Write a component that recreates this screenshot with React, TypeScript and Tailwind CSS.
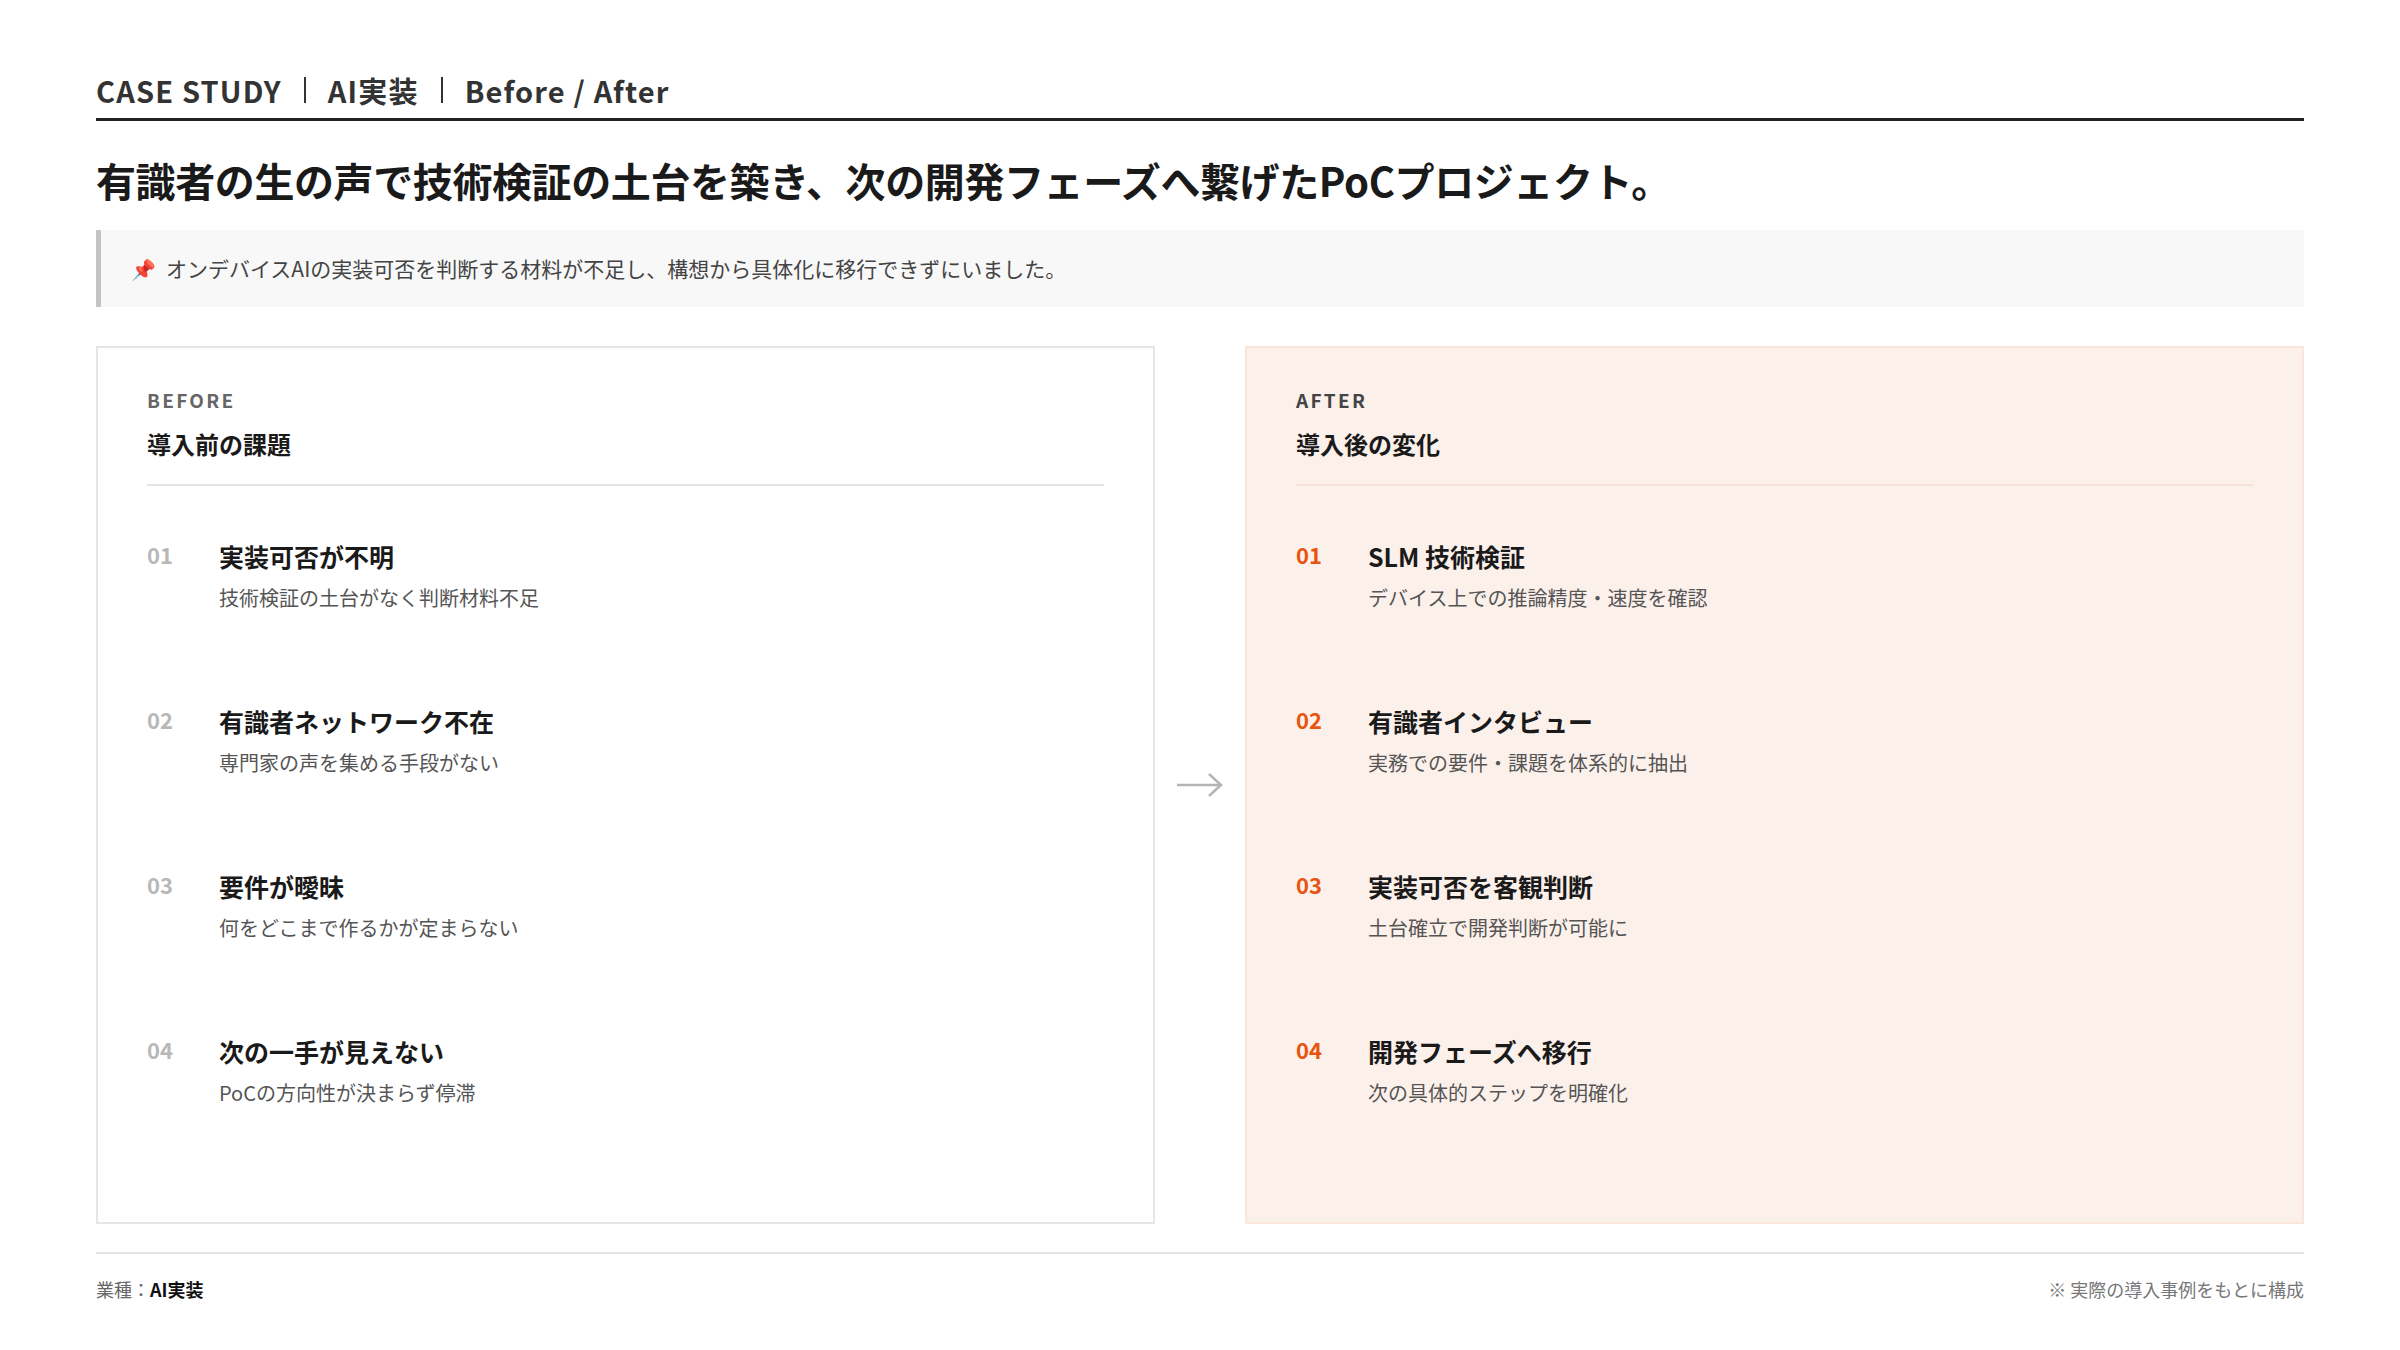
const before = [
  ["01", "実装可否が不明", "技術検証の土台がなく判断材料不足"],
  ["02", "有識者ネットワーク不在", "専門家の声を集める手段がない"],
  ["03", "要件が曖昧", "何をどこまで作るかが定まらない"],
  ["04", "次の一手が見えない", "PoCの方向性が決まらず停滞"],
];
const after = [
  ["01", "SLM 技術検証", "デバイス上での推論精度・速度を確認"],
  ["02", "有識者インタビュー", "実務での要件・課題を体系的に抽出"],
  ["03", "実装可否を客観判断", "土台確立で開発判断が可能に"],
  ["04", "開発フェーズへ移行", "次の具体的ステップを明確化"],
];

function Card({ label, title, items, accent }: { label: string; title: string; items: string[][]; accent: boolean }) {
  return (
    <div className={`flex-1 h-[878px] px-[49px] pt-[38px] border-2 ${accent ? "bg-[#fcf0eb] border-[#fbe6dc]" : "bg-white border-[#e6e6e6]"}`}>
      <div className={`text-[19px] font-bold tracking-[0.12em] leading-[28px] ${accent ? "text-[#444]" : "text-[#666]"}`}>{label}</div>
      <div className="text-[24px] font-bold text-[#1a1a1a] leading-[34px] mt-[13px]">{title}</div>
      <div className={`h-[2px] mt-[23px] ${accent ? "bg-[#f8e2d8]" : "bg-[#e3e3e3]"}`} />
      <div className="flex flex-col mt-[50px]">
        {items.map(([n, t, d]) => (
          <div key={n} className="flex h-[165px]">
            <div className={`w-[72px] text-[22px] font-bold leading-[36px] ${accent ? "text-[#e8540f]" : "text-[#b8b8b8]"}`}>{n}</div>
            <div>
              <div className="text-[25px] font-bold text-[#1a1a1a] leading-[40px]">{t}</div>
              <div className="text-[20px] text-[#555] leading-[32px] mt-[6px]">{d}</div>
            </div>
          </div>
        ))}
      </div>
    </div>
  );
}

export default function App() {
  return (
    <div className="w-[2400px] h-[1350px] bg-white px-[96px] pt-[70px] text-[#222]" style={{ fontFamily: '"Noto Sans CJK JP", "Noto Sans", sans-serif' }}>
      <div className="flex items-center gap-[22px] text-[29px] font-bold text-[#333] tracking-[0.04em] leading-[40px] pb-[8px] border-b-[3px] border-[#222]">
        <span>CASE STUDY</span>
        <span className="w-[2px] h-[26px] bg-[#333]" />
        <span>AI実装</span>
        <span className="w-[2px] h-[26px] bg-[#333]" />
        <span>Before / After</span>
      </div>
      <h1 className="text-[40px] font-bold text-[#1a1a1a] leading-[56px] mt-[31px] tracking-[-0.01em]">有識者の生の声で技術検証の土台を築き、次の開発フェーズへ繋げたPoCプロジェクト。</h1>
      <div className="mt-[22px] h-[77px] bg-[#f8f8f8] border-l-[5px] border-[#c4c4c4] flex items-center pl-[30px] text-[21px] text-[#444]">
        <span className="mr-[10px] text-[20px]">📌</span>
        オンデバイスAIの実装可否を判断する材料が不足し、構想から具体化に移行できずにいました。
      </div>
      <div className="flex items-center mt-[39px]">
        <Card label="BEFORE" title="導入前の課題" items={before} accent={false} />
        <div className="w-[90px] flex justify-center">
          <svg width="50" height="30" viewBox="0 0 50 30" fill="none" stroke="#b5b5b5" strokeWidth="2.5">
            <path d="M2 15 H46 M34 4 L46 15 L34 26" />
          </svg>
        </div>
        <Card label="AFTER" title="導入後の変化" items={after} accent={true} />
      </div>
      <div className="h-[2px] bg-[#e3e3e3] mt-[28px]" />
      <div className="flex justify-between items-center mt-[22px] text-[18px] text-[#666]">
        <div>業種：<span className="font-bold text-[#111]">AI実装</span></div>
        <div className="text-[#777]">※ 実際の導入事例をもとに構成</div>
      </div>
    </div>
  );
}
